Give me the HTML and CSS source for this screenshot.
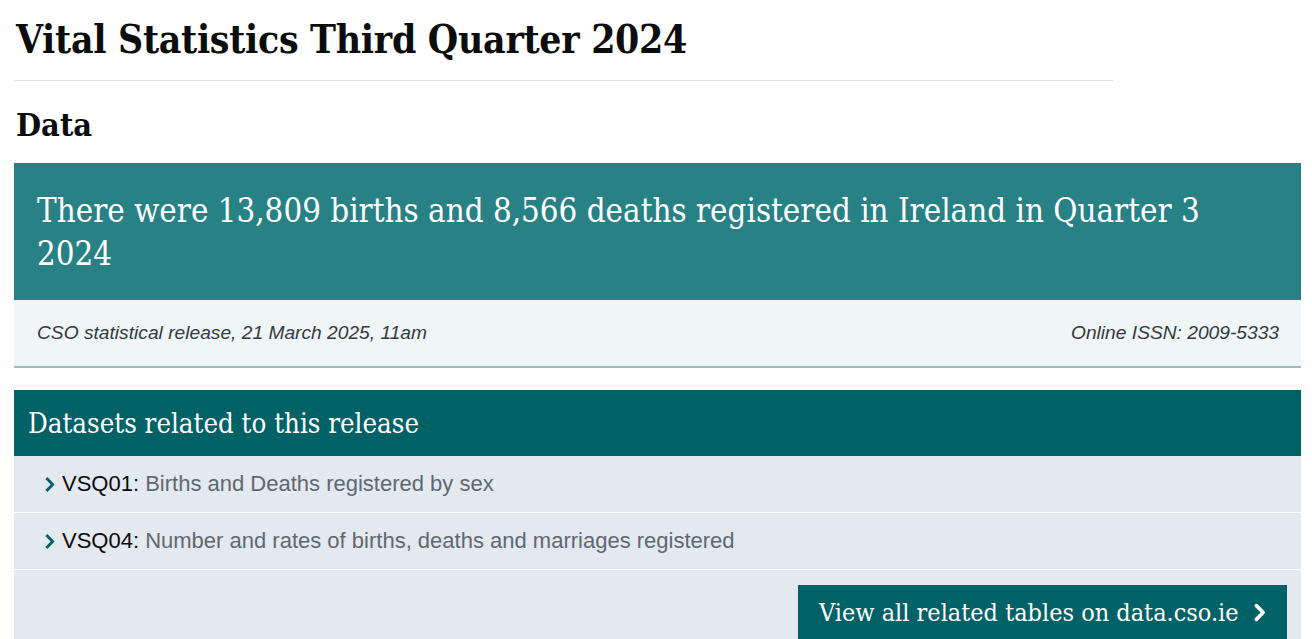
FILE: index.html
```html
<!DOCTYPE html>
<html lang="en">
<head>
<meta charset="utf-8">
<title>Vital Statistics Third Quarter 2024</title>
<link rel="stylesheet" href="styles.css">
</head>
<body>
<main class="page">
  <h1 class="title">Vital Statistics Third Quarter 2024</h1>
  <hr class="rule">
  <h2 class="section">Data</h2>

  <div class="headline">
    <p class="headline-text">There were 13,809 births and 8,566 deaths registered in Ireland in Quarter 3 2024</p>
  </div>
  <div class="meta">
    <span class="meta-item">CSO statistical release, 21 March 2025, 11am</span>
    <span class="meta-item">Online ISSN: 2009-5333</span>
  </div>

  <section class="datasets">
    <div class="datasets-head">Datasets related to this release</div>
    <ul class="datasets-list">
      <li class="dataset">
        <svg class="chev" viewBox="0 0 10 16" width="10" height="15"><path d="M2.2 2.2 L7.8 8 L2.2 13.8" fill="none" stroke="#006166" stroke-width="3" stroke-linecap="square"/></svg>
        <span class="code">VSQ01</span>: <span class="desc">Births and Deaths registered by sex</span>
      </li>
      <li class="dataset">
        <svg class="chev" viewBox="0 0 10 16" width="10" height="15"><path d="M2.2 2.2 L7.8 8 L2.2 13.8" fill="none" stroke="#006166" stroke-width="3" stroke-linecap="square"/></svg>
        <span class="code">VSQ04</span>: <span class="desc">Number and rates of births, deaths and marriages registered</span>
      </li>
    </ul>
    <div class="datasets-foot">
      <a class="view-all" href="#">View all related tables on data.cso.ie
        <svg class="btn-chev" viewBox="0 0 12 18" width="13" height="19"><path d="M3 2.5 L9.5 9 L3 15.5" fill="none" stroke="#ffffff" stroke-width="3.4" stroke-linecap="round" stroke-linejoin="round"/></svg>
      </a>
    </div>
  </section>
</main>
</body>
</html>
```

FILE: styles.css
```css
html, body {
  margin: 0;
  padding: 0;
  background: #ffffff;
}

.page {
  width: 1287px;
  margin-left: 14px;
  font-family: "Liberation Sans", Arial, sans-serif;
}

.title {
  font-family: "DejaVu Serif", serif;
  font-stretch: condensed;
  font-weight: 700;
  font-size: 38.8px;
  line-height: 44px;
  color: #0b0c0c;
  margin: 0;
  padding: 18px 0 0 2px;
  letter-spacing: -0.3px;
}

.rule {
  width: 1099px;
  margin: 18px 0 0 0;
  border: 0;
  border-top: 1px solid #dcdcdc;
  height: 0;
}

.section {
  font-family: "DejaVu Serif", serif;
  font-stretch: condensed;
  font-weight: 700;
  font-size: 32.2px;
  line-height: 40px;
  color: #0b0c0c;
  margin: 0;
  padding: 24px 0 0 2px;
  height: 56px;
  box-sizing: border-box;
}

.headline {
  margin-top: 26px;
  background: #278185;
  padding: 27px 23px 0 23px;
  height: 137px;
  box-sizing: border-box;
}

.headline-text {
  margin: 0;
  font-family: "DejaVu Serif", serif;
  font-stretch: condensed;
  font-weight: 400;
  font-size: 32.8px;
  line-height: 43px;
  color: #ffffff;
  max-width: 1200px;
}

.meta {
  display: flex;
  justify-content: space-between;
  align-items: center;
  height: 68px;
  box-sizing: border-box;
  padding: 0 22px 0 23px;
  background: #f0f5f8;
  border-bottom: 2px solid #9cbcc0;
  font-style: italic;
  font-size: 19.2px;
  color: #333a40;
}

.datasets {
  margin-top: 22px;
  background: #e4e8ef;
}

.datasets-head {
  height: 66px;
  display: flex;
  align-items: center;
  padding-left: 14px;
  background: #006166;
  color: #ffffff;
  font-family: "DejaVu Serif", serif;
  font-stretch: condensed;
  font-weight: 300;
  font-size: 27.4px;
}

.datasets-list {
  list-style: none;
  margin: 0;
  padding: 0;
}

.dataset {
  height: 57px;
  box-sizing: border-box;
  display: flex;
  align-items: center;
  padding-left: 31px;
  border-bottom: 1px solid #ffffff;
  font-size: 22px;
  color: #0b0c0c;
  white-space: pre;
}

.chev {
  margin-right: 7px;
  flex: none;
}

.code {
  color: #0b0c0c;
}

.desc {
  color: #5f6872;
}

.datasets-foot {
  display: flex;
  justify-content: flex-end;
  padding: 15px 14px 0 0;
  height: 69px;
  box-sizing: border-box;
}

.view-all {
  display: flex;
  align-items: center;
  justify-content: space-between;
  height: 55px;
  padding: 0 21px 0 21px;
  width: 489px;
  box-sizing: border-box;
  background: #006166;
  color: #ffffff;
  text-decoration: none;
  font-family: "DejaVu Serif", serif;
  font-stretch: condensed;
  font-weight: 300;
  font-size: 25px;
  white-space: nowrap;
}
```
